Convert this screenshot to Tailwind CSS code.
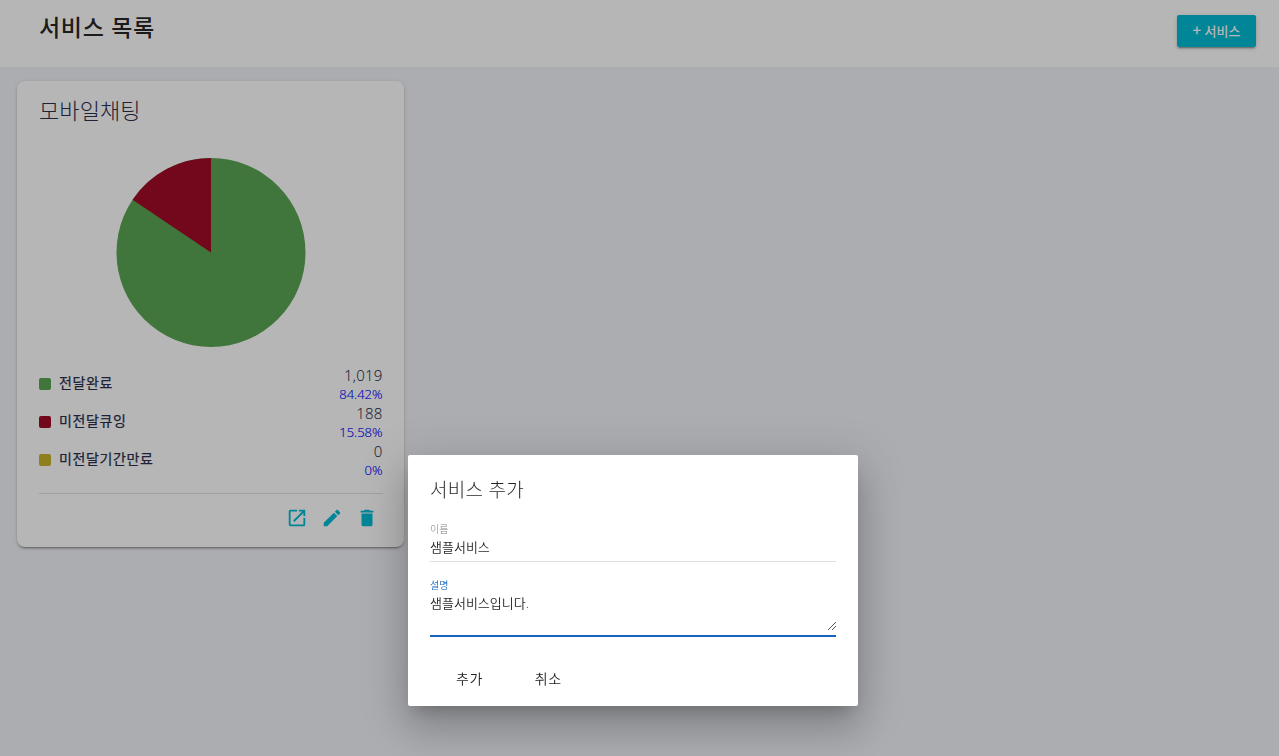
<!DOCTYPE html>
<html lang="ko">
<head>
<meta charset="utf-8">
<title>서비스 목록</title>
<script src="https://cdn.jsdelivr.net/npm/@tailwindcss/browser@4"></script>
</head>
<body class="relative h-[756px] overflow-hidden bg-[#f2f3f8] font-['Open_Sans','Noto_Sans_CJK_KR',sans-serif] text-[#2c304d]">
<header class="flex h-[67px] items-start justify-between bg-white pl-[39px] pr-[23px]">
  <h1 class="mt-[11px] text-[23px] leading-[32px] font-medium tracking-[0.7px] whitespace-nowrap text-black/87">서비스 목록</h1>
  <button class="mt-[15px] h-8 w-[79px] rounded-xs bg-[#00bcd4] text-[13px] leading-[30px] font-medium whitespace-nowrap text-white shadow-[0_3px_1px_-2px_rgba(0,0,0,.2),0_2px_2px_0_rgba(0,0,0,.14),0_1px_5px_0_rgba(0,0,0,.12)]"><span class="font-['Noto_Sans_CJK_KR'] text-[15px] leading-none">+</span> 서비스</button>
</header>
<main class="px-[17px] pt-[14px]">
  <section class="flex h-[466px] w-[387px] flex-col rounded-lg bg-white px-[22px] shadow-[0_3px_1px_-2px_rgba(0,0,0,.2),0_2px_2px_0_rgba(0,0,0,.14),0_1px_5px_0_rgba(0,0,0,.12)]">
    <h2 class="mt-[13px] h-8 text-[22px] leading-8 font-light tracking-[0.1px] whitespace-nowrap">모바일채팅</h2>
    <svg class="mt-[32px] h-[189px] w-full shrink-0" viewBox="0 0 343 189">
      <circle cx="172" cy="94.5" r="94.5" fill="#5aa454"/>
      <path d="M172 94.5V0A94.5 94.5 0 0 0 93.6 41.7Z" fill="#a10a28"/>
    </svg>
    <ul class="mt-[19px] mr-[-0.5px]">
      <li class="flex h-[38px] justify-between">
        <div class="flex h-[36px] items-center gap-2 text-[14px] tracking-[0.6px] [-webkit-text-stroke:0.25px]"><i class="h-3 w-3 rounded-xs bg-[#5aa454]"></i><span class="-mt-[3px]">전달완료</span></div>
        <div class="text-right"><p class="h-[19px] text-[15px] leading-[19px] font-light tracking-[0.2px] [-webkit-text-stroke:0.1px]">1,019</p><p class="h-[19px] text-[13px] leading-[18px] font-light text-[#00f] [-webkit-text-stroke:0.15px]">84.42%</p></div>
      </li>
      <li class="flex h-[38px] justify-between">
        <div class="flex h-[36px] items-center gap-2 text-[14px] tracking-[0.6px] [-webkit-text-stroke:0.25px]"><i class="h-3 w-3 rounded-xs bg-[#a10a28]"></i><span class="-mt-[3px]">미전달큐잉</span></div>
        <div class="text-right"><p class="h-[19px] text-[15px] leading-[19px] font-light tracking-[0.2px] [-webkit-text-stroke:0.1px]">188</p><p class="h-[19px] text-[13px] leading-[18px] font-light text-[#00f] [-webkit-text-stroke:0.15px]">15.58%</p></div>
      </li>
      <li class="flex h-[38px] justify-between">
        <div class="flex h-[36px] items-center gap-2 text-[14px] tracking-[0.6px] [-webkit-text-stroke:0.25px]"><i class="h-3 w-3 rounded-xs bg-[#c7b42c]"></i><span class="-mt-[3px]">미전달기간만료</span></div>
        <div class="text-right"><p class="h-[19px] text-[15px] leading-[19px] font-light tracking-[0.2px] [-webkit-text-stroke:0.1px]">0</p><p class="h-[19px] text-[13px] leading-[18px] font-light text-[#00f] [-webkit-text-stroke:0.15px]">0%</p></div>
      </li>
    </ul>
    <div class="mt-[13px] mr-[-1px] flex justify-end gap-[13px] border-t border-black/12 pt-[13px] pr-[5px] text-[#00bcd4]">
      <svg class="h-[22px] w-[22px]" viewBox="0 0 24 24" fill="currentColor"><path d="M19 19H5V5h7V3H5c-1.11 0-2 .9-2 2v14c0 1.1.89 2 2 2h14c1.1 0 2-.9 2-2v-7h-2v7zM14 3v2h3.59l-9.83 9.83 1.41 1.41L19 6.41V10h2V3h-7z"/></svg>
      <svg class="h-[22px] w-[22px]" viewBox="0 0 24 24" fill="currentColor"><path d="M3 17.25V21h3.75L17.81 9.94l-3.75-3.75L3 17.25zM20.71 7.04c.39-.39.39-1.02 0-1.41l-2.34-2.34c-.39-.39-1.02-.39-1.41 0l-1.83 1.83 3.75 3.75 1.83-1.83z"/></svg>
      <svg class="h-[22px] w-[22px]" viewBox="0 0 24 24" fill="currentColor"><path d="M6 19c0 1.1.9 2 2 2h8c1.1 0 2-.9 2-2V7H6v12zM19 4h-3.5l-1-1h-5l-1 1H5v2h14V4z"/></svg>
    </div>
  </section>
</main>
<div class="absolute inset-0 bg-black/[0.288]"></div>
<div role="dialog" class="absolute top-[455px] left-[408px] flex h-[251px] w-[450px] flex-col rounded-xs bg-white px-[22px] text-black/87 shadow-[0_11px_15px_-7px_rgba(0,0,0,.2),0_24px_38px_3px_rgba(0,0,0,.14),0_9px_46px_8px_rgba(0,0,0,.12)] will-change-transform">
  <h3 class="mt-[21px] h-7 text-[19px] leading-7 font-light tracking-[0.3px]">서비스 추가</h3>
  <label class="mt-[17px] h-4 text-[10px] leading-[17px] font-light text-black/54">이름</label>
  <div class="h-[25px] border-b border-black/12 text-[13px] leading-[20px] font-[350]">샘플서비스</div>
  <label class="mt-[15px] h-4 text-[10px] leading-4 font-[350] text-[#1565c0]">설명</label>
  <div class="flex h-[44px] items-end justify-between border-b-2 border-[#1565c0] text-[13px] leading-[20px] font-[350]">
    <span class="self-start">샘플서비스입니다.</span>
    <svg class="mb-[5px] h-2 w-2" viewBox="0 0 8 8" stroke="#444" stroke-width=".9"><path d="M0 8L8 0M4 8L8 4"/></svg>
  </div>
  <div class="mt-[26px] flex pl-[26px] text-[14px] leading-8 font-[350] tracking-[0.5px]">
    <button class="mr-[52px]">추가</button><button>취소</button>
  </div>
</div>
</body>
</html>
